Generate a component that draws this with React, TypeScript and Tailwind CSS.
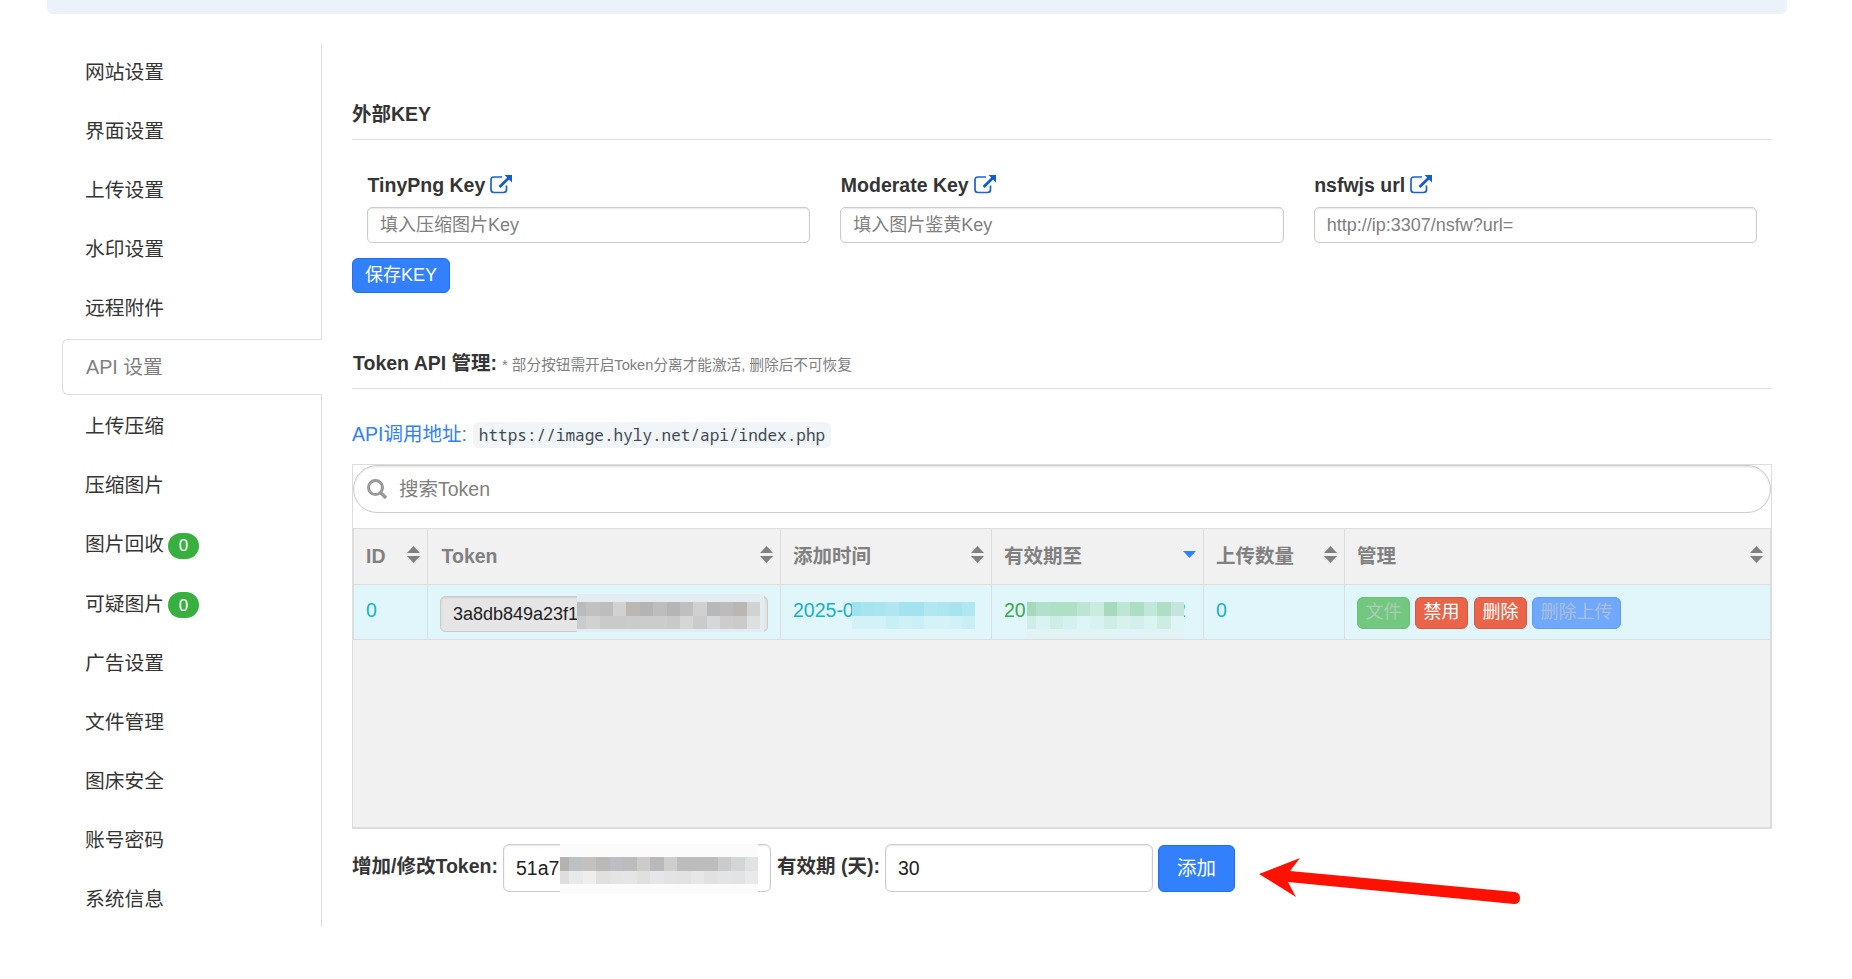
import React, { useState } from 'react';

const navItems = [
  { label: '网站设置' },
  { label: '界面设置' },
  { label: '上传设置' },
  { label: '水印设置' },
  { label: '远程附件' },
  { label: 'API 设置' },
  { label: '上传压缩' },
  { label: '压缩图片' },
  { label: '图片回收', badge: '0' },
  { label: '可疑图片', badge: '0' },
  { label: '广告设置' },
  { label: '文件管理' },
  { label: '图床安全' },
  { label: '账号密码' },
  { label: '系统信息' },
];

const keyFields = [
  { label: 'TinyPng Key', placeholder: '填入压缩图片Key' },
  { label: 'Moderate Key', placeholder: '填入图片鉴黄Key' },
  { label: 'nsfwjs url', placeholder: 'http://ip:3307/nsfw?url=' },
];

const columns = ['ID', 'Token', '添加时间', '有效期至', '上传数量', '管理'];

// Couleurs des blocs de masquage, ligne par ligne
const tokenMask = [
  ['#bbbbbb', '#c1c1c1', '#bdbdbd', '#d1d1d1', '#bab7b5', '#b4b4b4', '#bdbdbd', '#b4b5b6', '#bfbfbf', '#d0d0d0', '#b8b8b8', '#bcbcbc', '#b9b6b4', '#d0d2d3'],
  ['#cbcbcd', '#d1d1d1', '#cacaca', '#cacaca', '#cbcbcb', '#cccccc', '#cccccc', '#c9c9c9', '#d6d6d7', '#cbcbcb', '#d6d7d8', '#cfcdcc', '#cbcbcb', '#dddfe1'],
];
const addedMask = [
  ['#9fe2ef', '#a6e4ef', '#a9e5ef', '#b1e6ef', '#a3e3ef', '#a3e3ef', '#b1e7f0', '#ade6ef', '#a7e4ef', '#b0e7f0'],
  ['#d2f2f8', '#d3f2f8', '#d3f2f8', '#c7eff6', '#cff1f6', '#c9f0f6', '#d3f3f8', '#d5f3f7', '#d1f1f8', '#c8eff6'],
];
const expireMask = [
  ['#a5d9b9', '#b1e0cb', '#ade0c4', '#ade0c4', '#bee5d3', '#c9ebe0', '#a5dabb', '#bfe5d4', '#addec2', '#c0e7d8', '#aedec5', '#c5e5dc'],
  ['#cdede5', '#d9f3f3', '#cdede5', '#d5f1ef', '#dcf5f5', '#d8f2ef', '#cdede5', '#d8f1ec', '#d2efec', '#daf4f2', '#cdede3', '#dff4f4'],
];
const newTokenMask = [
  ['#b5b1af', '#bdc1c3', '#c2c1c0', '#bab9b8', '#bcbec1', '#bcbcbc', '#cccbca', '#b9b9b9', '#cececf', '#bcbcbc', '#bcbcbc', '#bdbdbd', '#cbcbcb', '#d3d6d7', '#e2e2e2'],
  ['#dfdddd', '#e7e9eb', '#efeded', '#e0e0e0', '#e4e4e4', '#e5e5e6', '#e0e0df', '#e5e6e9', '#e3e3e3', '#e2e2e2', '#e7e7e7', '#e1e1e2', '#e4e4e4', '#e2e3e5', '#e9e9e9'],
];

function Mosaic({ rows, className }: { rows: string[][]; className: string }) {
  return (
    <div className={`absolute flex flex-col ${className}`}>
      {rows.map((row, i) => (
        <div key={i} className="flex flex-1">
          {row.map((color, j) => (
            <span key={j} className="flex-1 first:flex-[0.7]" style={{ backgroundColor: color }} />
          ))}
        </div>
      ))}
    </div>
  );
}

function ExternalLinkIcon() {
  return (
    <svg className="mb-px w-[22px] h-[19px]" viewBox="0 0 22 19" fill="none">
      <path d="M12 2H4Q1 2 1 5V14.5Q1 17.5 4 17.5H13.5Q16.5 17.5 16.5 14.5V10.5" stroke="#1f60cb" strokeWidth="1.7" />
      <path d="M9.5 12L19 2.8" stroke="#145ccd" strokeWidth="2.8" />
      <path d="M14.5 0H22V7.5Z" fill="#145ccd" />
    </svg>
  );
}

function SortIcon({ active }: { active?: boolean }) {
  return (
    <svg className="w-[13px] h-[17px] shrink-0" viewBox="0 0 13 17">
      {active ? (
        <path d="M0 5H13L6.5 12Z" fill="#3280fc" />
      ) : (
        <path d="M0 7L6.5 0L13 7ZM0 10H13L6.5 17Z" fill="#808080" />
      )}
    </svg>
  );
}

export default function App() {
  const [activeTab, setActiveTab] = useState('API 设置');
  const [days, setDays] = useState('30');

  return (
    <div className="relative h-[979px] w-[1852px] overflow-hidden bg-white pl-[47px] font-['Liberation_Sans','Noto_Sans_CJK_SC',sans-serif] text-[19.5px] leading-[28px] text-[#353535]">
      {/* Bandeau supérieur */}
      <div className="h-[14px] w-[1740px] rounded-b-md bg-[#ebf2f9]" />

      <div className="flex items-start pt-[30px] pl-[15px]">
        {/* Navigation latérale */}
        <nav className="flex h-[883px] w-[260px] flex-col text-[19.75px]">
          {navItems.map((item) => (
            <div
              key={item.label}
              className={`shrink-0 border-r border-[#ddd] last:h-[56px] has-[.is-active]:border-r-0 ${
                item.badge ? 'h-[59.5px]' : 'h-[59px]'
              }`}
            >
              <button
                onClick={() => setActiveTab(item.label)}
                className={`flex h-[56px] w-full items-center pl-[23px] text-left ${
                  activeTab === item.label
                    ? 'is-active rounded-l-md border border-r-0 border-[#ddd] pl-[22px] text-[#808080]'
                    : ''
                }`}
              >
                {item.label}
                {item.badge && (
                  <span className="mt-[3px] ml-1 flex h-[26px] w-[31px] items-center justify-center rounded-full bg-[#38b03f] pt-px text-[17px] text-white">
                    {item.badge}
                  </span>
                )}
              </button>
              {activeTab === item.label && <div className="ml-auto h-[3px] w-px bg-[#ddd]" />}
            </div>
          ))}
        </nav>

        <main className="ml-[30px] w-[1420px] pt-[56px]">
          {/* Clés externes */}
          <h4 className="h-[40px] border-b border-[#e1e1e1] font-bold">外部KEY</h4>
          <div className="grid grid-cols-3 gap-x-[30px] px-[15px] pt-[31px]">
            {keyFields.map((field) => (
              <div key={field.label}>
                <label className="flex h-[28px] items-center gap-[5px] pl-[0.5px] font-bold">
                  {field.label}
                  <ExternalLinkIcon />
                </label>
                <input
                  placeholder={field.placeholder}
                  className="mt-[8px] block h-[36px] w-full rounded-[5px] border border-[#ccc] px-[12px] text-[18px] shadow-[inset_0_1px_2px_rgba(0,0,0,0.1)] placeholder:text-[#808080]"
                />
              </div>
            ))}
          </div>
          <button className="mt-[15px] block h-[35px] w-[98px] rounded-[6px] border border-[#1970fc] bg-[#3280fc] text-[18px] leading-[33px] text-white">
            保存KEY
          </button>

          {/* Gestion des tokens */}
          <h4 className="mt-[56px] flex h-[40px] items-start border-b border-[#e1e1e1] pl-px font-bold whitespace-nowrap">
            Token API 管理:
            <small className="mt-[2px] ml-[5px] text-[14.65px] font-normal text-[#808080]">
              * 部分按钮需开启Token分离才能激活, 删除后不可恢复
            </small>
          </h4>
          <div className="mt-[31px] flex h-[30px] items-center">
            <span className="mb-[2px] text-[#3280fc]">API调用地址:</span>
            <code className="-mt-px ml-[6px] h-[26px] rounded-[6px] bg-[#f2f5f7] px-[6px] font-['Noto_Sans_Mono','DejaVu_Sans_Mono',monospace] text-[16.05px] leading-[26px] text-[#3d4a54]">
              https://image.hyly.net/api/index.php
            </code>
          </div>

          <div className="mt-[14px] h-[365px] border border-[#ddd]">
            <div className="flex h-[48px] items-center rounded-full border border-[#ccc] pl-[13px] shadow-[inset_0_1px_2px_rgba(0,0,0,0.12)]">
              <svg className="h-[20px] w-[20px]" viewBox="0 0 20 20" fill="none" stroke="#999" strokeWidth="3">
                <circle cx="8.5" cy="8.5" r="7" />
                <path d="M13.5 13.5L19 19" strokeWidth="3.4" />
              </svg>
              <input placeholder="搜索Token" className="ml-[12px] flex-1 outline-none placeholder:text-[#808080]" />
            </div>

            <div className="mt-[15px] h-[300px] border border-[#ddd] border-l-0 bg-[#f1f1f1]">
              <div className="grid h-full grid-cols-[74px_353px_211px_212px_141px_1fr] grid-rows-[56px_55px_1fr]">
                {columns.map((name) => (
                  <div
                    key={name}
                    className="flex items-center justify-between border-b border-l border-[#ddd] pr-[7.5px] pb-[2px] pl-[12px] font-bold text-[#808080] nth-[2]:pl-[13.5px]"
                  >
                    {name}
                    <span className="-mt-[2px] flex">
                      <SortIcon active={name === '有效期至'} />
                    </span>
                  </div>
                ))}

                <div className="border-b border-l border-[#ddd] bg-[#e1f6fb] pt-[11px] pl-[12px] text-[#17b1c6]">0</div>
                <div className="relative border-b border-l border-[#ddd] bg-[#e1f6fb] pt-[11px] pl-[12px]">
                  <input
                    readOnly
                    value="3a8db849a23f1"
                    className="block h-[36px] w-[328px] rounded-[5px] border border-[#ccc] bg-[#e5e5e5] px-[12px] text-[18px] text-[#222] shadow-[inset_0_1px_2px_rgba(0,0,0,0.1)]"
                  />
                  <div className="absolute top-[9px] left-[149px] h-[38px] w-[187px] bg-[#e1edf0]" />
                  <Mosaic rows={tokenMask} className="top-[17px] left-[149px] h-[27px] w-[183px]" />
                </div>
                <div className="relative border-b border-l border-[#ddd] bg-[#e1f6fb] pt-[11px] pl-[12px] text-[#17b1c6]">
                  2025-0
                  <Mosaic rows={addedMask} className="top-[17px] left-[71px] h-[27px] w-[123px]" />
                </div>
                <div className="relative border-b border-l border-[#ddd] bg-[#e1f6fb] pt-[11px] pl-[12px] text-[#38a84a]">
                  20
                  <span className="absolute top-[11px] left-[183px] text-[#2fb3a5]">2</span>
                  <div className="absolute top-[44px] left-[35px] h-[10px] w-[157px] bg-[#e1f3f7]" />
                  <Mosaic rows={expireMask} className="top-[17px] left-[35px] h-[27px] w-[157px]" />
                </div>
                <div className="border-b border-l border-[#ddd] bg-[#e1f6fb] pt-[11px] pl-[12px] text-[#17b1c6]">0</div>
                <div className="flex gap-[5px] border-b border-l border-[#ddd] bg-[#e1f6fb] pt-[12px] pl-[12px] text-[18px] leading-[28px] text-white">
                  <button className="h-[32px] w-[53px] rounded-[6px] border border-[#6bbd78] bg-[#73c880] pb-[2px] text-[#adcbb8]">文件</button>
                  <button className="mr-px h-[32px] w-[53px] rounded-[6px] border border-[#d75840] bg-[#ea644a] pb-[2px]">禁用</button>
                  <button className="h-[32px] w-[53px] rounded-[6px] border border-[#d75840] bg-[#ea644a] pb-[2px]">删除</button>
                  <button className="h-[32px] w-[89px] rounded-[6px] border border-[#639cf2] bg-[#70a8fc] pb-[2px] text-[#a9bfdc]">删除上传</button>
                </div>
              </div>
            </div>
          </div>

          {/* Formulaire d'ajout */}
          <div className="relative mt-[15px] flex h-[48px] items-center whitespace-nowrap">
            <label className="w-[151px] pb-[4px] font-bold">增加/修改Token:</label>
            <div className="relative">
              <input
                defaultValue="51a7"
                className="block h-[48px] w-[268px] rounded-[6px] border border-[#ccc] px-[12px] text-[#222] shadow-[inset_0_1px_2px_rgba(0,0,0,0.1)]"
              />
              <div className="absolute top-0 left-[57px] h-[50px] w-[198px] bg-[#fbfbfb]" />
              <Mosaic rows={newTokenMask} className="top-[13px] left-[57px] h-[27px] w-[198px]" />
            </div>
            <label className="ml-[6px] w-[108px] pb-[4px] font-bold">有效期 (天):</label>
            <input
              value={days}
              onChange={(e) => setDays(e.target.value)}
              className="h-[48px] w-[268px] rounded-[6px] border border-[#ccc] px-[12px] text-[#222] shadow-[inset_0_1px_2px_rgba(0,0,0,0.1)]"
            />
            <button className="mt-px ml-[5px] h-[47px] w-[77px] rounded-[6px] border border-[#1970fc] bg-[#3280fc] pb-px text-white">
              添加
            </button>
            <svg className="absolute top-[12px] left-[906px] h-[52px] w-[264px]" viewBox="0 0 264 52">
              <path
                d="M1 18L42 2L32 15L257 36Q262 37 262 42Q262 48 256 48L30 26L38 41Z"
                fill="#fe1100"
              />
            </svg>
          </div>
        </main>
      </div>
    </div>
  );
}
